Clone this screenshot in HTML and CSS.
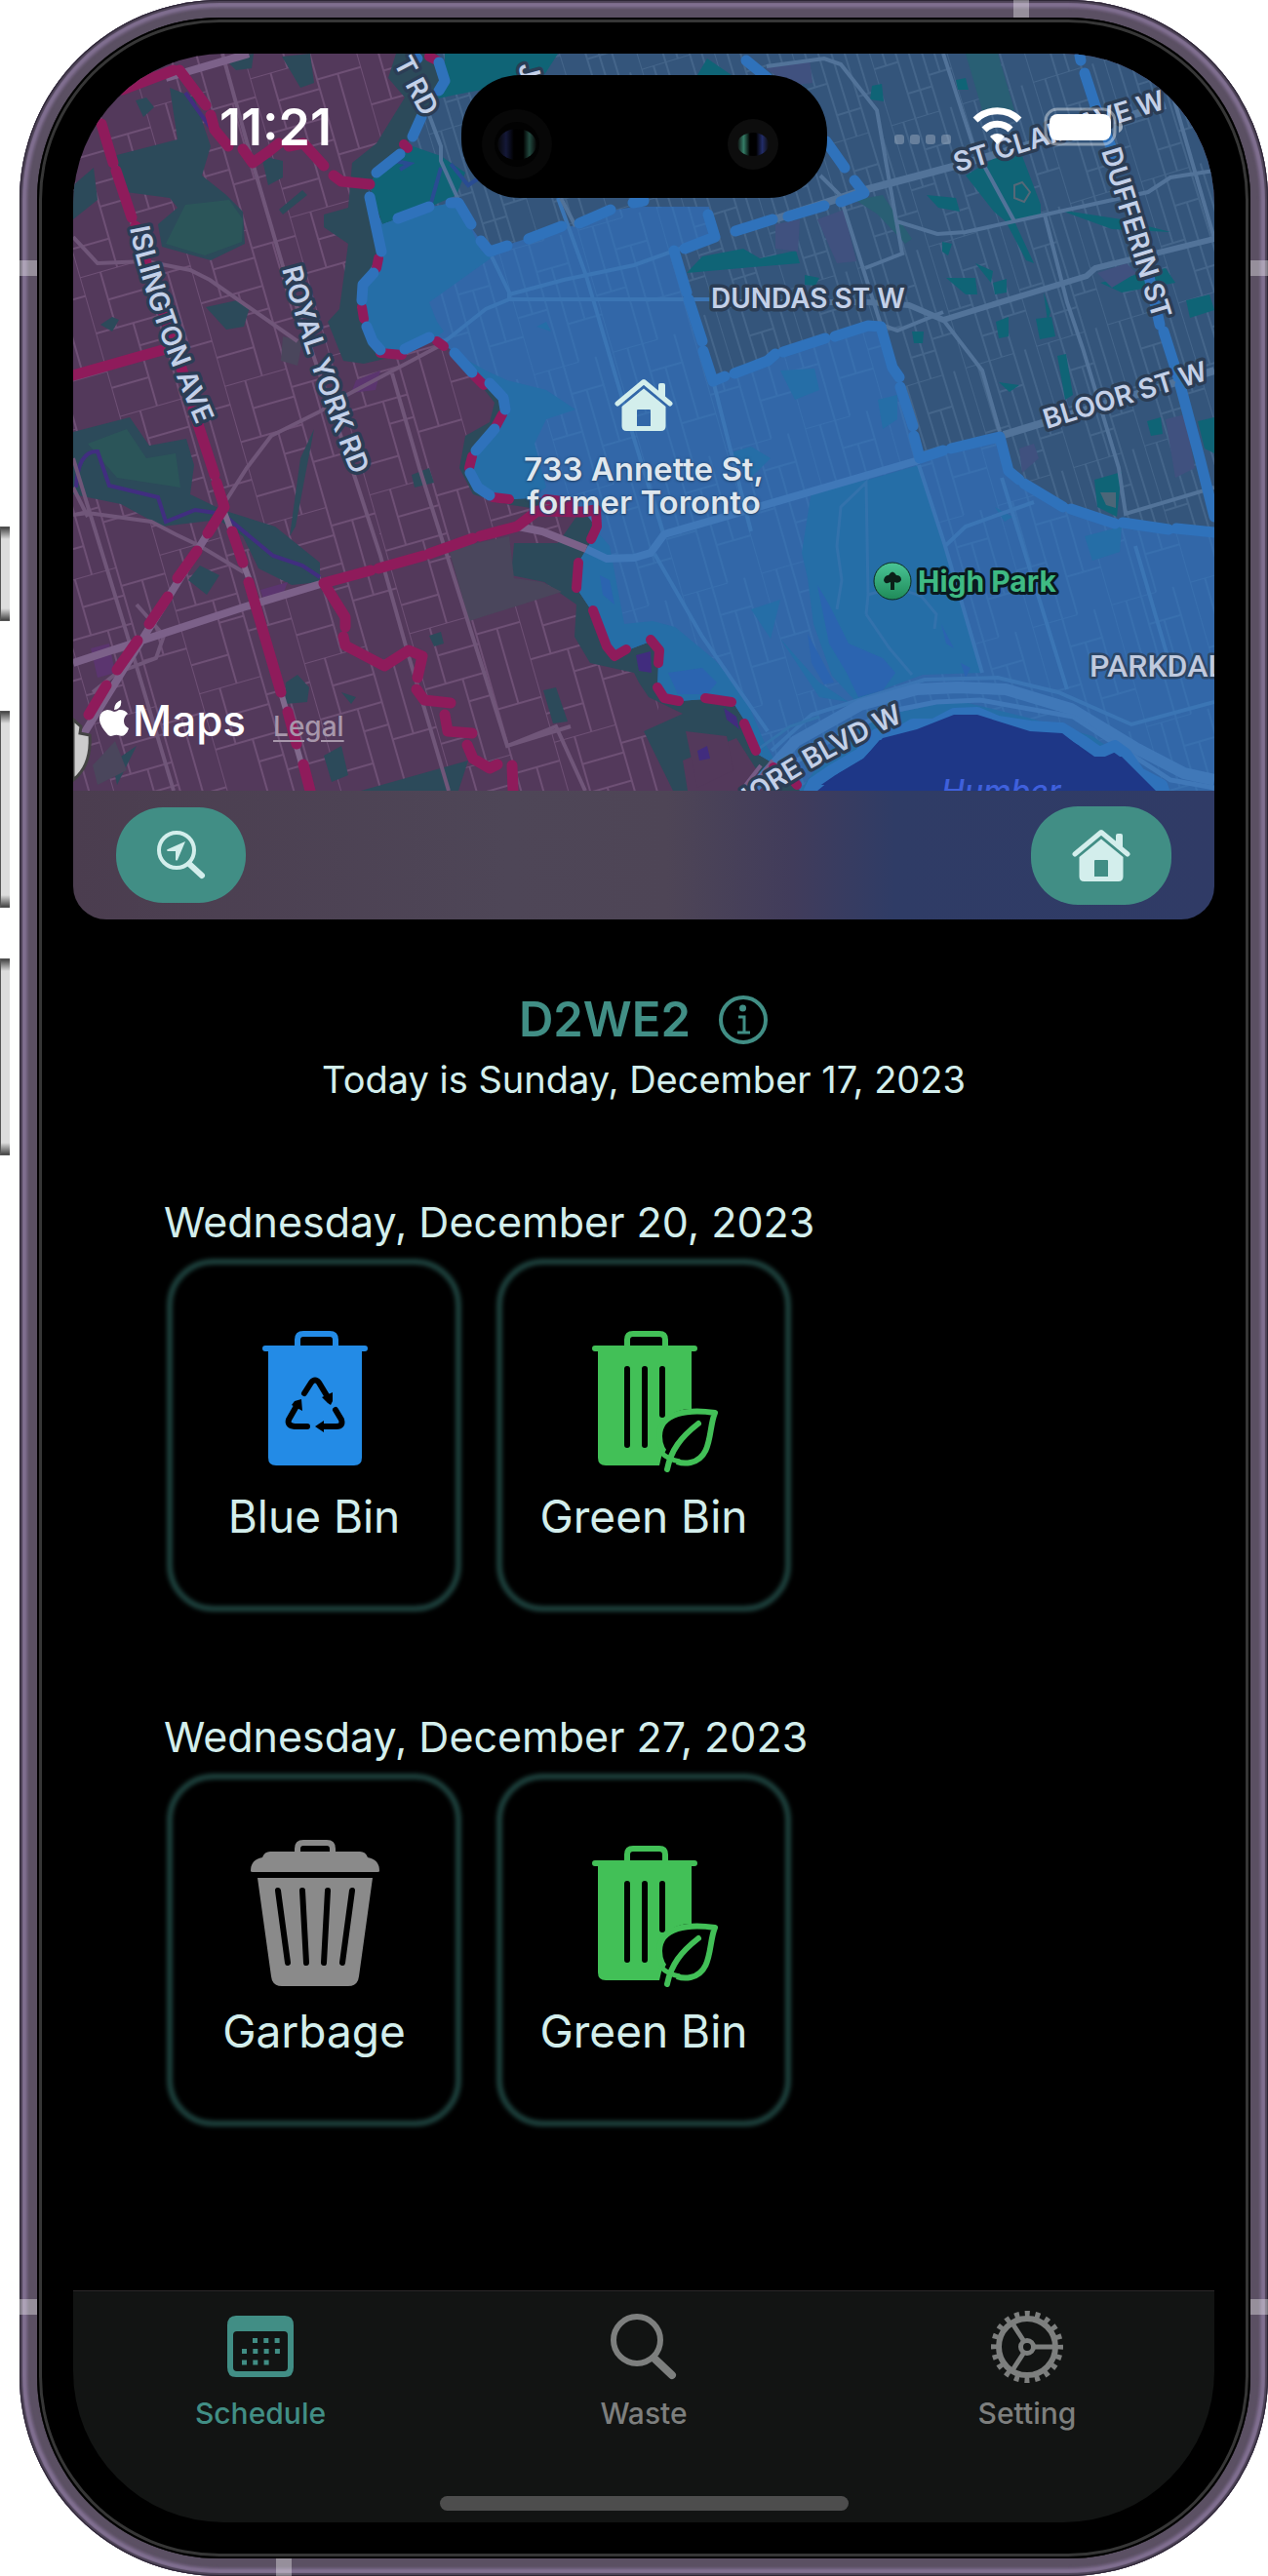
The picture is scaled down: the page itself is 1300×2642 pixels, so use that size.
FILE: index.html
```html
<!DOCTYPE html>
<html lang="en">
<head>
<meta charset="utf-8">
<meta name="viewport" content="width=device-width, initial-scale=1">
<title>Waste schedule</title>
<link rel="stylesheet" href="styles.css">
</head>
<body>
<svg class="sprite" aria-hidden="true">
  <symbol id="house" viewBox="0 0 60 54">
    <path d="M3 26 30 3.500 57 26" fill="none" stroke="currentColor" stroke-width="5" stroke-linecap="round" stroke-linejoin="round"/>
    <path d="M45 7q0-2 2-2h3q2 0 2 2v15l-7-6z" fill="currentColor"/>
    <path fill-rule="evenodd" d="M30 10.500 52.500 29v20q0 5-5 5h-35q-5 0-5-5V29zM24 32q-1 0-1 1v16h14V33q0-1-1-1z" fill="currentColor"/>
  </symbol>
  <symbol id="green-bin" viewBox="0 0 129 145">
    <path d="M36 17V9q0-6 6-6h27q6 0 6 6v8" fill="none" stroke="currentColor" stroke-width="6"/>
    <path d="M3 15h102q3 0 3 3t-3 3h-3v59c-20 0-34 12-34 30 0 7 2 12 4 15l-3 13H14q-8 0-8-8V21H3q-3 0-3-3t3-3z" fill="currentColor"/>
    <path d="M36 39v78M54 39v78M72 39v47" stroke="#000" stroke-width="6" stroke-linecap="round"/>
    <path d="M126 84c-26-4-57-1-57 24 0 20 18 30 32 27 23-5 18-35 25-51z" fill="#000" stroke="currentColor" stroke-width="6" stroke-linejoin="round"/>
    <path d="M109 95c-18 14-28 27-32 47" fill="none" stroke="#000" stroke-width="15"/>
    <path d="M70 124q8 8 20 10" fill="none" stroke="currentColor" stroke-width="5"/>
    <path d="M109 95c-18 14-28 27-32 47" fill="none" stroke="currentColor" stroke-width="6" stroke-linecap="round"/>
  </symbol>
</svg>
<span class="side-key side-key-mute"></span>
<span class="side-key side-key-up"></span>
<span class="side-key side-key-down"></span>
<div class="phone">
  <span class="band band-lt"></span><span class="band band-rt"></span>
  <span class="band band-lb"></span><span class="band band-rb"></span>
  <span class="band band-top"></span><span class="band band-bottom"></span>
  <div class="bezel">
    <div class="screen">
      <div class="status">
        <time class="clock">11:21</time>
        <div class="island">
          <svg viewBox="0 0 375 126" aria-hidden="true">
            <defs>
              <linearGradient id="lens1"><stop offset="0" stop-color="#070707"/><stop offset=".22" stop-color="#141838"/><stop offset=".42" stop-color="#000"/><stop offset=".66" stop-color="#000"/><stop offset=".82" stop-color="#224a40"/><stop offset="1" stop-color="#060606"/></linearGradient>
              <linearGradient id="lens2"><stop offset="0" stop-color="#0e0e0e"/><stop offset=".2" stop-color="#347c66"/><stop offset=".4" stop-color="#000"/><stop offset=".6" stop-color="#000"/><stop offset=".8" stop-color="#222c68"/><stop offset="1" stop-color="#0e0e0e"/></linearGradient>
            </defs>
            <circle cx="57" cy="71" r="36" fill="#070707"/><circle cx="57" cy="71" r="23" fill="#020202"/><ellipse cx="57" cy="71" rx="20" ry="16" fill="url(#lens1)"/>
            <circle cx="299" cy="71" r="26" fill="#0d0d0d"/><ellipse cx="299" cy="71" rx="16" ry="12" fill="url(#lens2)"/>
          </svg>
        </div>
        <svg class="status-icons" viewBox="0 0 236 42" aria-hidden="true">
          <g fill="#fff" fill-opacity=".25"><rect x="0" y="29" width="10" height="10" rx="3"/><rect x="16" y="29" width="10" height="10" rx="3"/><rect x="32" y="29" width="10" height="10" rx="3"/><rect x="48" y="29" width="10" height="10" rx="3"/></g>
          <g fill="none" stroke="#fff" stroke-width="7"><path d="M83 14a32 32 0 0 1 45 0"/><path d="M92 24a19 19 0 0 1 27 0"/></g>
          <path d="M98 31a11 11 0 0 1 15 0l-7.500 8z" fill="#fff"/>
          <rect x="155" y="3" width="71" height="36" rx="12" fill="none" stroke="#fff" stroke-opacity=".4" stroke-width="3"/>
          <rect x="159" y="8" width="63" height="27" rx="8" fill="#fff"/>
          <path d="M230 15q4 2 4 6t-4 6z" fill="#fff" fill-opacity=".5"/>
        </svg>
      </div>
      <section class="map" aria-label="Collection area map">
        <svg class="map-art" viewBox="75 55 1170 756" preserveAspectRatio="xMidYMid slice">
          <defs>
            <pattern id="streets-w" width="112" height="148" patternUnits="userSpaceOnUse" patternTransform="rotate(-16)">
              <path d="M0 0V148M22 0V60M40 60V148M66 0V148M88 20V100M0 0H66M66 20H112M0 60H66M40 84H66M66 100H112M0 118H40M22 30H66" fill="none" stroke="#6e5075" stroke-width="2"/>
            </pattern>
            <pattern id="streets-e" width="76" height="130" patternUnits="userSpaceOnUse" patternTransform="rotate(-17)">
              <path d="M0 0V130M13 0V70M26 0V130M39 34V130M52 0V130M64 0V92M0 0H52M0 70H26M26 34H52M52 92H76M26 104H52" fill="none" stroke="#44658a" stroke-width="2"/>
            </pattern>
            <pattern id="streets-b" width="84" height="130" patternUnits="userSpaceOnUse" patternTransform="rotate(-16)">
              <path d="M0 0V130M16 0V70M32 0V130M48 30V130M66 0V90M0 0H48M0 70H32M32 30H66M48 90H84" fill="none" stroke="#386fae" stroke-width="2"/>
            </pattern>
            <linearGradient id="pin" x2="0" y2="1"><stop offset="0" stop-color="#4ac596"/><stop offset="1" stop-color="#1f8a58"/></linearGradient>
            <path id="zone" d="M377 192 386 227 391 257 375 283 369 297 371 320 377 347 390 362 415 360 446 347 468 363 498 393 518 413 512 433 487 460 481 487 498 503 522 512 568 510 597 523 611 540 605 557 593 577 591 603 607 627 622 663 630 673 643 667 669 657 676 667 675 680 674 707 681 717 696 719 723 717 750 718 764 740 776 773 793 783 816 805 820 811H1245V543L1203 542 1147 537 1096 520 1048 493 1033 483 1027 448 969 462 944 470 936 443 915 377 903 333H890L849 347 799 362 787 370 749 383 731 390 720 360 704 300 691 257 733 243 727 212H650L622 217 593 230 539 245 502 257 493 247 481 230 468 207 439 213 392 230Z"/>
            <clipPath id="zone-clip"><use href="#zone"/></clipPath>
            <path id="islington" d="M133 234 Q150 320 210 455"/>
            <path id="royal" d="M289 276 Q315 375 374 520"/>
            <path id="dufferin" d="M1129 155 Q1155 240 1192 360"/>
            <path id="shore" d="M744 846 Q850 768 970 722"/>
          </defs>
          <rect x="75" y="55" width="1170" height="756" fill="#53395b"/>
          <rect x="75" y="55" width="600" height="756" fill="url(#streets-w)"/>
          <g fill="#2c4a5a">
            <path d="M174 90 199 100 216 150 207 180 232 200 249 217 251 250 216 267 166 253 162 230 182 213 174 203 129 197 116 160 182 143z"/>
            <path d="M75 443 133 428 153 457 191 450 199 477 195 507 228 523 282 540 328 577V597L299 600 265 583 249 550 224 533 166 540 124 517 75 507z"/>
            <path d="M406 55 398 80 415 100 386 147 361 167 357 213 332 220V233L357 250 348 317 336 330 352 370 373 373 415 363 500 300V55z"/>
            <path d="M489 390 507 413 502 433 477 447 471 480 485 507 518 517 551 522 560 480 540 410z"/>
            <path d="M593 527 572 557 527 557 524 590 558 597 591 620 589 653 605 680 650 690 655 700 665 715 700 732 660 750 690 811H705L700 780 755 757 776 790 790 811H840L700 600 620 530z"/>
            <path d="M230 60 260 55 258 70 242 72zM289 58 318 55 322 85 308 90zM139 103 150 100 158 110 147 120zM268 160 290 165V182L275 190zM211 315 243 308 256 315 250 335 232 338zM103 333 115 325 122 328 115 340zM75 190 96 172 100 205 75 225zM193 595 205 580 225 590 212 610zM293 700 305 692 317 705 315 720 292 722zM332 775 350 765 357 795 340 802zM350 710 365 715 360 722zM115 782 140 765 120 805zM557 708 570 705 582 740 567 742zM440 652 452 648 455 660 445 663zM308 470 322 440 303 540 297 550zM422 487 440 480 445 495 425 500zM370 811 480 780 470 811zM286 215 310 195 315 200 290 220z"/>
          </g>
          <g fill="#2b5559"><path d="M190 210 235 205 249 225 248 248 210 262 170 250z"/><path d="M90 455 130 440 150 470 180 465 185 500 120 490z"/></g>
          <path d="M460 563 522 550 527 593 556 597 576 607 481 637z" fill="#4a465c"/>
          <path d="M93 665 112 660 118 690 100 695zM267 605 295 597 290 610 270 615zM365 390 390 380 385 400 360 403z" fill="#5b356f"/>
          <path d="M290 345 310 350 305 375 288 370zM118 760 130 790 100 805 95 785z" fill="#4a465c"/>
          <path d="M703 750 745 755 752 790 715 808z" fill="#53395b"/>
          <path d="M652 672 667 668 668 690 655 688zM742 726 755 735 758 748 745 738zM715 770 725 765 728 778 717 780z" fill="#412c7e"/>
          <path d="M78 500Q80 462 100 463L112 498 162 510 170 535 200 523 228 527 280 570 310 580 328 592M190 95 215 130" fill="none" stroke="#412e80" stroke-width="4"/>

          <path d="M448 55H1245V560H700L377 192 386 177 421 143 433 117 448 97 456 83z" fill="#34557b"/>
          <path d="M448 55H1245V560H700L377 192 386 177 421 143 433 117 448 97 456 83z" fill="url(#streets-e)"/>
          <g fill="#0f6476">
            <path d="M456 55H572L556 80 468 97 440 103 456 83z"/>
            <path d="M423 150 452 160 477 177 468 200 439 213 392 230 379 190 386 177z"/>
            <path d="M990 180 1023 160H1048L1067 210V220L1040 227 1060 270 1052 267 1031 227 1019 217z"/>
            <path d="M704 280 720 263 762 255 779 265 816 257 820 270 760 275z"/>
            <path d="M725 60 750 77 715 77zM894 88 904 86 906 104 892 102zM980 82 990 80 993 92 982 92zM970 285 1000 285 1002 302 990 302zM1000 270 1018 278 1016 290zM1018 290 1032 286 1032 300 1020 302zM1062 327 1078 325 1082 345 1066 348zM1070 300 1077 320 1074 330zM1084 365 1093 363 1100 405 1092 410zM1216 308 1240 302 1245 318 1220 326zM1176 432 1190 428 1192 445 1180 447zM1128 290 1195 275 1205 290 1150 300zM1085 215 1150 225 1200 238 1140 235zM1122 492 1150 484 1145 530 1125 520zM1228 432 1245 428V465L1235 460zM935 340 947 340 946 352 937 352zM966 248 976 250 972 262 966 258zM1024 392 1045 395 1035 402zM950 200 980 203 984 217 962 213zM1021 330 1034 325 1034 345 1024 347zM825 282 840 285 836 293 825 292z"/>
          </g>
          <g fill="#295f74"><path d="M990 55H1023L1040 113H1007zM877 205 905 200 935 245 928 250 900 220z"/></g>
          <g fill="#40517f"><path d="M785 70 830 60 833 85 810 88zM795 230 820 225 818 258 795 255zM838 225 865 215 878 268 858 270zM1045 460 1060 455 1065 470 1048 485zM1030 240 1040 245z"/><path d="M1125 280 1155 270 1165 280 1140 295zM1195 430 1215 425 1225 480 1205 490z"/></g>
          <path d="M1128 505H1144V521L1134 518z" fill="#4c6678"/>
          <path d="M1040 190 1048 187 1056 197 1050 207 1040 203z" fill="none" stroke="#556878" stroke-width="2"/>
          <path d="M452 172 442 208M462 168 480 190 495 180M405 165 420 168 410 174" fill="none" stroke="#294c92" stroke-width="4"/>

          <use href="#zone" fill="#3267a8"/>
          <g clip-path="url(#zone-clip)">
            <use href="#zone" fill="url(#streets-b)"/>
            <g fill="#256ea7">
              <path d="M832 503 890 492 942 477 1007 690 946 692 876 718 853 693 834 640 828 593 822 567z"/>
              <path d="M370 230 468 200 493 257 510 260 440 310 448 330 455 340 415 370H360z"/>
              <path d="M468 363 498 380 520 390 560 400 590 420 560 430 548 455 560 500 530 520H470V400z"/>
              <path d="M590 520 625 560 640 640 669 637 692 643 733 677 762 710 783 760 800 790 740 790 590 690z"/>
              <path d="M1112 550 1150 540 1148 566 1120 575zM770 625 800 615 790 655zM800 380 835 378 840 400 815 410zM747 465 770 458 790 470 770 490zM900 410 920 405 920 430 905 440zM550 335 560 330 565 340zM1020 520 1038 530 1030 535zM800 655 840 700 870 720 840 715zM850 770 900 735 980 718 1050 735 1120 755 1170 790 1200 811H820z"/>
            </g>
            <g fill="#2b64b0"><path d="M838 600 850 620 870 660 905 675 918 690 905 708 880 715 868 690 850 660z"/><path d="M965 640 978 665 970 660zM985 680 995 685 990 695zM828 650 855 700 845 702 832 680z"/><path d="M685 690 720 685 735 700 725 712 695 712zM615 590 625 595 630 620 618 610z"/></g>
          </g>
          <g fill="none" stroke="#3b75b4" stroke-width="4">
            <path d="M504 263 522 300 522 307M572 203 601 283 650 450 680 547M450 355 498 317 522 307H730M522 302 578 287 650 272 733 242M942 477 969 560 1007 690M1027 490 1094 707M1164 560 1201 687M671 568 720 653 787 750M731 390 770 545M969 560 990 540 1060 515M791 770 832 733 948 697 1023 695 1085 710 1160 743 1245 720"/>
          </g>
          <path d="M858 625 863 595 858 560 862 520 888 495 890 610M888 630 890 610Q920 600 945 612L960 630 958 645M888 630 912 665 935 692M775 770 810 745 840 735" fill="none" stroke="#3372ac" stroke-width="3"/>
          <g fill="none" stroke="#4078b8">
            <path d="M601 563 622 573 650 572 667 567 681 548 942 472" stroke-width="8"/>
            <path d="M770 811 816 760 882 723 940 707 982 705 1031 707 1098 727 1164 767 1214 793 1245 800" stroke-width="12"/>
            <path d="M785 800 850 760 910 730 960 720 1005 718 1100 735 1200 800 1245 808" stroke-width="5"/>
          </g>
          <path d="M830 811 834 803 853 790 882 773 899 753 919 753 936 743 957 743 978 732 1002 731 1023 740 1056 745 1089 747 1110 760 1127 772 1143 765 1154 773 1168 793 1191 805 1193 811z" fill="#1e3787" stroke="#2f72bb" stroke-width="12" stroke-linejoin="round"/>
          <path d="M838 811 860 793 885 778 905 757 940 748 978 733 1002 733 1056 750 1089 752 1120 776 1150 776 1185 811z" fill="#1e3787"/>

          <g fill="none" stroke="#705679" stroke-width="4">
            <path d="M228 55 259 167 290 273 365 493 390 570 419 673 437 733 460 811"/>
            <path d="M450 355 352 407 328 422 278 447 253 480 232 513M75 243 100 270 150 268 195 277 215 287 305 350M75 528 90 526 155 535 180 548 205 560 250 587M75 470 130 650 178 811M402 383 430 480 520 765 585 745M75 500 90 530M520 765 570 745 600 811M140 620 168 652 160 675 120 690 95 710"/>
          </g>
          <path d="M170 80 255 55M75 680 249 623 332 598M531 540 556 545 601 563M75 770 228 523" fill="none" stroke="#7c6189" stroke-width="8"/>
          <path d="M104 127 151 273 189 387 228 520 255 593 288 710 317 811" fill="none" stroke="#80698c" stroke-width="6"/>
          <path d="M770 811 792 780M760 811 780 785" stroke="#765c86" stroke-width="4"/>
          <g fill="none" stroke="#527399" stroke-width="4">
            <path d="M440 118 452 150 452 165 470 205M575 203 590 232M967 55 998 150 1040 227M786 68 845 60 862 66 899 113 919 227 961 240 990 238 1177 197 1200 182 1245 175M1071 220 1094 310 1110 357 1147 480 1154 527 1245 500M967 328 1007 380 1025 443M841 180 861 200 903 333 920 339 967 320M887 275 925 260 919 227M1190 55 1245 245"/>
            <path d="M733 310H890L932 313 967 328 1114 283 1123 275 1245 245" stroke-width="6"/>
            <path d="M754 238 886 195 980 170 1195 108M1029 446 1245 380" stroke-width="8"/>
          </g>

          <g fill="none" stroke="#8f1b5b" stroke-width="11" stroke-linecap="round" stroke-linejoin="round">
            <path d="M125 92 178 72M184 72 211 108M216 118 220 133 234 150M249 153 259 167 276 155 286 147M296 150 311 147 332 170M342 180 350 186 379 189"/>
            <path d="M104 127 116 167M119 175 135 223M139 232 151 273 170 327 189 387M198 420 220 487M222 495 230 520 213 547M238 545 249 577M255 597 288 710M295 730 304 763M311 784 318 811"/>
            <path d="M75 385 170 358M202 565 182 593M172 612 153 640M141 657 120 687M109 703 91 733"/>
            <path d="M611 523 597 525 551 524 530 540 492 550M485 552 440 568M434 570 388 583M380 585 332 598 354 633V643M352 653 354 662 394 683 419 667 433 673 428 695M427 707 435 718 462 721M456 733 459 750 484 752M479 764 485 778 502 788 510 784M525 785 526 811"/>
            <path d="M611 523 612 540 606 553M593 577 591 603M608 626 622 663 630 673 642 666M667 656 676 667 675 680M674 705 681 716 696 719M723 716 750 720M763 742 775 770M793 787 800 793M813 800 817 805M388 265 386 275M371 315 373 327M390 362 412 364M448 350 455 355M485 384 496 395M515 425 508 438M484 468 481 480M505 510 522 512M560 512 585 515M414 148 418 152M440 58 448 62" stroke-width="10"/>
          </g>
          <g fill="none" stroke="#2f72bb" stroke-width="11" stroke-linecap="round" stroke-linejoin="round">
            <path d="M425 58 428 60M450 64 456 83 450 93M432 120 423 140M410 158 386 177M379 202 391 258M383 280 372 292 371 308M376 335 382 350 390 359M415 358 440 346M466 362 484 382M502 393 516 408 518 420M507 440 488 462M482 485 490 500 502 508"/>
            <path d="M408 224 440 212M462 208 470 208 483 230M493 247 502 258 520 252M542 245 576 232M594 229 626 215M649 208 660 206"/>
            <path d="M726 220 733 243 702 255M691 257 704 300M706 307 720 350M721 360 731 391 743 386M753 383 787 370 795 363M803 361 846 347M856 345 890 334 903 335 915 377 922 387M923 397 936 437M937 447 943 470 967 462M975 460 1025 448 1034 483 1045 492M1050 496 1090 520M1098 522 1143 537M1151 536 1198 543M1206 542 1245 546"/>
            <path d="M754 237 792 225M808 222 845 211M862 207 886 198 876 185M866 172 847 145M765 62 787 80M1107 57 1108 62M1112 75 1126 118 1143 160M1175 270 1189 333M1193 340 1208 387M1210 395 1230 470 1245 530"/>
          </g>

          <path d="M75 738 83 745 82 752 92 754Q94 785 75 800z" fill="#ccc" stroke="#444" stroke-width="3"/>
          <g class="road-name">
            <text><textPath href="#islington">ISLINGTON AVE</textPath></text>
            <text><textPath href="#royal">ROYAL YORK RD</textPath></text>
            <text><textPath href="#dufferin">DUFFERIN ST</textPath></text>
            <text><textPath href="#shore">SHORE BLVD W</textPath></text>
            <text transform="translate(403 64) rotate(62)">T RD</text>
            <text transform="translate(531 67) rotate(75)">J</text>
            <text x="729" y="316">DUNDAS ST W</text>
            <text transform="translate(1073 440) rotate(-17)">BLOOR ST W</text>
            <text transform="translate(981 177) rotate(-17)">ST CLAIR AVE W</text>
          </g>
          <text class="district" x="1117" y="694">PARKDALE</text>
          <text class="water" x="965" y="823">Humber</text>
          <circle cx="915" cy="596" r="19" fill="url(#pin)" stroke="#0d2a20"/>
          <path d="M913 605V597Q907 600 906 595 907 590 911 590 915 583 919 590 924 590 924 595 922 599 917 597V605z" fill="#0b1f18"/>
          <text class="park" x="941" y="607">High Park</text>
        </svg>
        <div class="marker">
          <svg viewBox="0 0 60 54" aria-hidden="true"><use href="#house"/></svg>
          <span>733 Annette St,<br>former Toronto</span>
        </div>
        <div class="credit">
          <svg viewBox="0 0 30 37" aria-hidden="true"><path d="M22 0q1 5-2 8-2 2-5 2 0-4 2-6.500Q19 1 22 0zM15 12q2 0 5-2 6-.5 9 4-4 3-4 7.500 0 5 5 7.500-1 4-4 6.500-2 2-5 1-3.500-1.500-6.500-.3-4 1.800-6-.7Q-1 25 0 18q1-7 8-8 3 0 7 2z" fill="#fff"/></svg>
          <span>Maps</span>
          <a href="#legal">Legal</a>
        </div>
      </section>
      <div class="toolbar">
        <button type="button" aria-label="Search this area">
          <svg width="50" height="50" viewBox="0 0 50 50"><circle cx="20" cy="20" r="18" fill="none" stroke="currentColor" stroke-width="4"/><path d="M33 34 46 46" stroke="currentColor" stroke-width="6" stroke-linecap="round"/><path d="M29 11 21 30Q20 31 19 30V21H11Q9 20 11 19z" fill="currentColor"/></svg>
        </button>
        <button type="button" class="wide" aria-label="Go to home address">
          <svg width="60" height="54"><use href="#house"/></svg>
        </button>
      </div>
      <main>
        <header>
          <div class="zone-title">
            <h1>D2WE2</h1>
            <button type="button" aria-label="Zone information"><svg width="52" height="52" viewBox="0 0 52 52"><circle cx="26" cy="26" r="23" fill="none" stroke="currentColor" stroke-width="4"/><circle cx="25.500" cy="14" r="3.500" fill="currentColor"/><path d="M21 23h6v16M20 39h13" fill="none" stroke="currentColor" stroke-width="3"/></svg></button>
          </div>
          <p>Today is Sunday, December 17, 2023</p>
        </header>
        <section class="pickup">
          <h2>Wednesday, December 20, 2023</h2>
          <ul>
            <li>
              <svg class="blue" width="108" height="138" viewBox="0 0 108 138" aria-hidden="true">
                <path d="M36 17V9q0-6 6-6h27q6 0 6 6v8" fill="none" stroke="currentColor" stroke-width="6"/>
                <path d="M3 15h102q3 0 3 3t-3 3h-3v109q0 8-8 8H14q-8 0-8-8V21H3q-3 0-3-3t3-3z" fill="currentColor"/>
                <g fill="none" stroke="#000" stroke-width="6" stroke-linecap="round" stroke-linejoin="round"><path d="M43 64 50 53Q54 48 58 53L67 68M75 81 81 91Q83 98 76 98H60M46 98H33Q25 97 27 91L35 77"/></g>
                <path d="M61 68 72 63V72L70 76 67 74zM63 92V104L54 98zM30 76 33 72 40 70 41 82z" fill="#000"/>
              </svg>
              <span>Blue Bin</span>
            </li>
            <li>
              <svg class="green" width="129" height="145" aria-hidden="true"><use href="#green-bin"/></svg>
              <span>Green Bin</span>
            </li>
          </ul>
        </section>
        <section class="pickup">
          <h2>Wednesday, December 27, 2023</h2>
          <ul>
            <li>
              <svg class="grey" width="132" height="150" viewBox="0 0 132 150" aria-hidden="true">
                <path d="M48 14V9q0-6 6-6h24q6 0 6 6v5" fill="none" stroke="currentColor" stroke-width="6"/>
                <path d="M20 12h92q6 0 8 6 12 2 12 14 0 1-2 1H2q-2 0-2-1Q0 20 12 18q2-6 8-6zM7 39H125L111 140q-1 10-11 10H32q-10 0-11-10z" fill="currentColor"/>
                <path d="M28 52 38 126M53 52 57 126M79 52 75 126M104 52 94 126" stroke="#000" stroke-width="6" stroke-linecap="round"/>
              </svg>
              <span>Garbage</span>
            </li>
            <li>
              <svg class="green" width="129" height="145" aria-hidden="true"><use href="#green-bin"/></svg>
              <span>Green Bin</span>
            </li>
          </ul>
        </section>
      </main>
      <nav class="tabs" aria-label="Main">
        <a href="#schedule" class="active" aria-current="page">
          <svg width="70" height="76" viewBox="0 0 70 76" aria-hidden="true"><path fill-rule="evenodd" d="M10 6H60Q69 6 69 16V59Q69 69 60 69H10Q1 69 1 59V16Q1 6 10 6zM11 22Q7 22 7 26V59Q7 63 11 63H59Q63 63 63 59V26Q63 22 59 22z" fill="currentColor"/><path d="M27 31.500h28M16 42.500h39M16 54h28" stroke="currentColor" stroke-width="5" stroke-dasharray="5 6.300"/></svg>
          Schedule
        </a>
        <a href="#waste">
          <svg width="70" height="76" viewBox="0 0 70 76" aria-hidden="true"><circle cx="28" cy="31" r="24" fill="none" stroke="currentColor" stroke-width="6"/><path d="M46 50 64 67" stroke="currentColor" stroke-width="8" stroke-linecap="round"/></svg>
          Waste
        </a>
        <a href="#setting">
          <svg width="76" height="76" viewBox="0 0 76 76" aria-hidden="true"><g fill="none" stroke="currentColor"><circle cx="38" cy="38" r="29" stroke-width="6"/><circle cx="38" cy="38" r="34" stroke-width="6" stroke-dasharray="5 5.680" stroke-dashoffset="2.500"/><circle cx="38" cy="38" r="6.500" stroke-width="5"/><path d="M46 38H66M34 31 23 14M34 45 23 62" stroke-width="5"/></g></svg>
          Setting
        </a>
        <span class="home-bar"></span>
      </nav>
    </div>
  </div>
</div>
</body>
</html>
```
FILE: styles.css
```css
* { box-sizing: border-box; }

body {
  position: relative;
  margin: 0;
  padding-left: 20px;
  background: #fff;
  color: #d3eeec;
  font-family: Inter, "Liberation Sans", sans-serif;
}

h1, h2, p, ul { margin: 0; padding: 0; font-weight: 400; }
button { border: 0; padding: 0; background: none; color: inherit; font: inherit; }
svg { display: block; }
.sprite { position: absolute; width: 0; height: 0; }

/* Device shell */
.side-key {
  position: absolute;
  left: 0;
  width: 10px;
  border: 1px solid #555;
  border-right: 0;
  background: linear-gradient(#444, #ddd 12px, #ddd calc(100% - 12px), #444);
}
.side-key-mute { top: 540px; height: 97px; }
.side-key-up { top: 729px; height: 202px; }
.side-key-down { top: 983px; height: 202px; }

.phone {
  position: relative;
  display: flex;
  min-height: 100vh;
  padding: 18px;
  border-radius: 205px;
  background: #5b5063;
  box-shadow:
    inset 0 0 0 1px #2d2635,
    inset 0 0 1px 3px #4c4256,
    inset 0 0 2px 7px #806f90,
    inset 0 0 2px 9px #6a5c76;
}
.band { position: absolute; background: rgba(255, 255, 255, .36); }
.band-lt, .band-rt { top: 267px; width: 18px; height: 16px; }
.band-lb, .band-rb { bottom: 268px; width: 18px; height: 16px; }
.band-lt, .band-lb { left: 0; }
.band-rt, .band-rb { right: 0; }
.band-top { top: 0; right: 245px; width: 16px; height: 18px; }
.band-bottom { bottom: 0; left: 263px; width: 16px; height: 18px; }

.bezel {
  display: flex;
  flex: 1;
  min-width: 0;
  padding: 37px;
  border-radius: 187px;
  background: #000;
  box-shadow: inset 0 0 0 2px #000, inset 0 0 0 5px #363636;
}
.screen {
  position: relative;
  display: flex;
  flex: 1;
  flex-direction: column;
  min-width: 0;
  overflow: hidden;
  border-radius: 155px;
  background: #000;
}

/* Status bar lies over the map */
.status {
  position: absolute;
  z-index: 2;
  inset: 22px 0 auto;
  display: grid;
  grid-template-columns: 1fr 375px 1fr;
}
.clock {
  padding: 24px 0 0 150px;
  color: #fff;
  font-size: 52px;
  font-weight: 600;
  line-height: 60px;
}
.island { height: 126px; border-radius: 60px; background: #000; }
.status-icons { width: 236px; height: 42px; margin: 32px 0 0 69px; }

/* Map */
.map { position: relative; overflow: hidden; }
.map-art { width: 100%; height: auto; }
.road-name text, .district, .park {
  paint-order: stroke;
  stroke-linejoin: round;
}
.road-name text {
  fill: #c3d0e8;
  stroke: #2b3d55;
  stroke-width: 7px;
  font-size: 28px;
  font-weight: 600;
}
.district {
  fill: #c0cade;
  stroke: #2d4768;
  stroke-width: 5px;
  font: 500 32px Roboto, sans-serif;
}
.water { fill: #3f60dc; font-size: 32px; font-style: italic; font-weight: 500; }
.park { fill: #3fba83; stroke: #0a1a20; stroke-width: 6px; font-size: 30px; font-weight: 700; }

.marker {
  position: absolute;
  top: 44%;
  left: 0;
  right: 0;
  display: flex;
  flex-direction: column;
  align-items: center;
  gap: 22px;
  color: #dfe7ee;
  font-size: 33px;
  font-weight: 600;
  line-height: 34px;
  text-align: center;
  text-shadow: 0 0 3px #24446c, 0 1px 2px #24446c;
}
.marker svg { width: 60px; height: 54px; color: #d3eeec; }

.credit {
  position: absolute;
  bottom: 39px;
  left: 27px;
  display: flex;
  align-items: baseline;
  gap: 4px;
  color: #fff;
  font-size: 44px;
  font-weight: 500;
  line-height: 54px;
}
.credit svg { width: 30px; height: 37px; }
.credit a {
  margin-left: 24px;
  color: #a797ab;
  font-size: 28px;
  text-underline-offset: 4px;
}

.toolbar {
  display: flex;
  align-items: center;
  justify-content: space-between;
  height: 132px;
  padding: 0 44px;
  border-radius: 0 0 34px 34px;
  background: linear-gradient(90deg, #4b3d4f, #4e4657 38%, #4e4556 52%, #413c5b 63%, #2f3c66 72%, #303b66);
}
.toolbar button {
  display: grid;
  place-items: center;
  width: 133px;
  height: 98px;
  border-radius: 48px;
  background: #418e85;
}
.toolbar .wide { width: 144px; height: 101px; }

/* Schedule */
main { flex: 1; padding: 72px 93px 140px; }
header { text-align: center; }
.zone-title {
  display: flex;
  align-items: center;
  justify-content: center;
  gap: 28px;
  color: #418e85;
}
h1 { font-size: 49px; font-weight: 600; line-height: 62px; }
header p { font-size: 38px; line-height: 60px; }

.pickup { padding-top: 84px; }
.pickup + .pickup { padding-top: 96px; }
h2 { margin-bottom: 6px; font-size: 43px; line-height: 64px; }
.pickup ul {
  display: flex;
  gap: 36px;
  padding: 0 3px;
  list-style: none;
}
.pickup li {
  position: relative;
  display: flex;
  flex-direction: column;
  align-items: center;
  width: 302px;
  height: 362px;
  padding-top: 232px;
  font-size: 46px;
  line-height: 64px;
}
.pickup li::before {
  content: "";
  position: absolute;
  inset: 0;
  border: 6px solid #1d403c;
  border-radius: 48px;
  filter: blur(2px);
}
.pickup li svg { position: absolute; top: 74px; left: 98px; }
.pickup li .grey { top: 68px; left: 86px; }
.blue { color: #238be6; }
.green { color: #42c057; }
.grey { color: #8a8a8a; }

/* Tab bar */
.tabs {
  position: relative;
  display: flex;
  justify-content: center;
  gap: 33px;
  min-height: 238px;
  border-top: 1px solid #2b2829;
  background: #121413;
}
.tabs a {
  display: flex;
  flex-direction: column;
  align-items: center;
  gap: 12px;
  width: 360px;
  padding-top: 19px;
  color: #7d7f7e;
  font-size: 30px;
  font-weight: 500;
  line-height: 36px;
  text-decoration: none;
}
.tabs .active { color: #418e85; }
.home-bar {
  position: absolute;
  bottom: 12px;
  left: 0;
  right: 0;
  width: 419px;
  height: 15px;
  margin: 0 auto;
  border-radius: 8px;
  background: #4d4d4d;
}
```
